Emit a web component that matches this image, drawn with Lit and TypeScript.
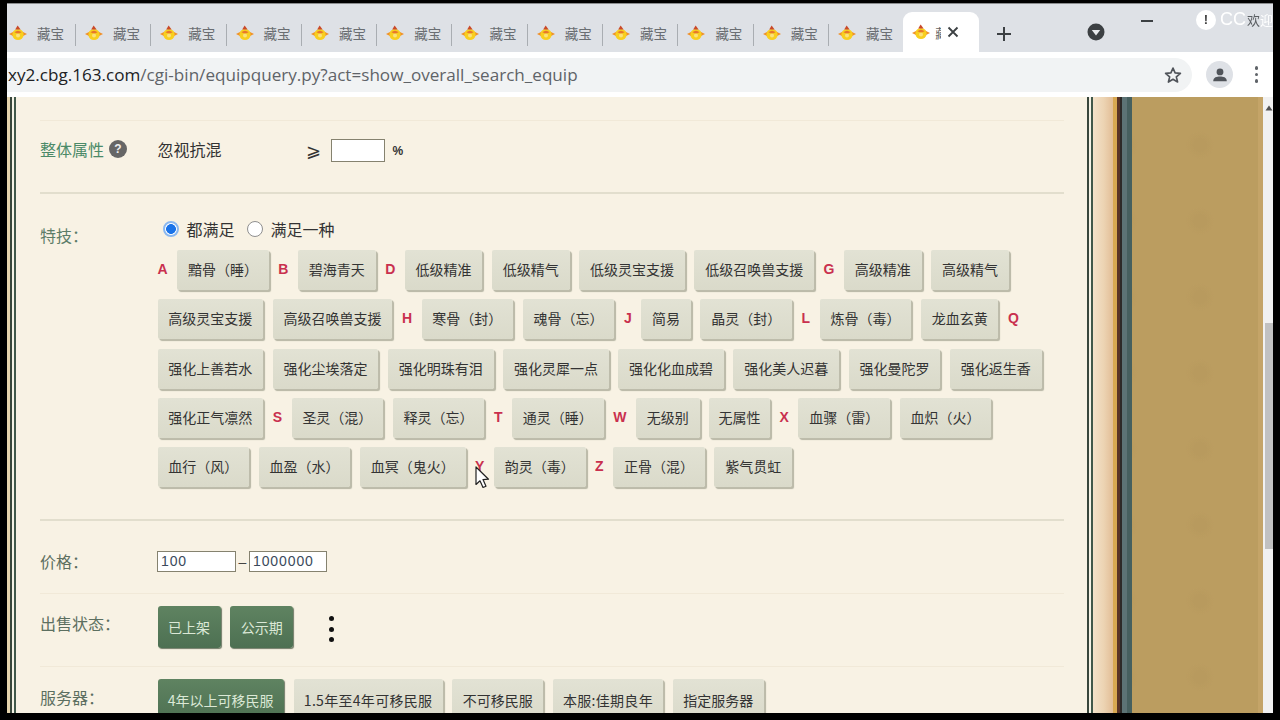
import { LitElement, html, css, svg } from "lit";
import { customElement } from "lit/decorators.js";

type Item = { l?: string; t?: string; narrow?: boolean };
const L = (l: string): Item => ({ l });
const B = (t: string, narrow = false): Item => ({ t, narrow });

const SKILLS: Item[] = [
  L("A"), B("黯骨（睡）"), L("B"), B("碧海青天"), L("D"), B("低级精准"), B("低级精气"), B("低级灵宝支援"), B("低级召唤兽支援"),
  L("G"), B("高级精准"), B("高级精气"),
  B("高级灵宝支援"), B("高级召唤兽支援"), L("H"), B("寒骨（封）"), B("魂骨（忘）"), L("J"), B("简易"), B("晶灵（封）"),
  L("L"), B("炼骨（毒）"), B("龙血玄黄"), L("Q"),
  B("强化上善若水"), B("强化尘埃落定"), B("强化明珠有泪"), B("强化灵犀一点"), B("强化化血成碧"), B("强化美人迟暮"), B("强化曼陀罗"), B("强化返生香"),
  B("强化正气凛然"), L("S"), B("圣灵（混）"), B("释灵（忘）"), L("T"), B("通灵（睡）"), L("W"), B("无级别"), B("无属性", true),
  L("X"), B("血骤（雷）"), B("血炽（火）"),
  B("血行（风）"), B("血盈（水）"), B("血冥（鬼火）"), L("Y"), B("韵灵（毒）"), L("Z"), B("正骨（混）"), B("紫气贯虹"),
];

const chick = svg`<svg class="fav" viewBox="0 0 18 18" width="18" height="18" aria-hidden="true">
  <path d="M0 10 L5 7.5 L5 12.5 Z" fill="#f0902a"/>
  <path d="M18 10 L13 7.5 L13 12.5 Z" fill="#f0902a"/>
  <circle cx="9" cy="10.5" r="5.6" fill="#f8cf1f"/>
  <path d="M6.2 5.6 L8.6 1.6 L11.6 5.6 Z" fill="#c9492a"/>
  <path d="M5.4 8.2 Q9 5.2 12.6 8.2 L9 9.8 Z" fill="#e8772a"/>
  <circle cx="9" cy="11.6" r="2" fill="#fbe27a"/>
</svg>`;

@customElement("app-root")
export class AppRoot extends LitElement {
  static styles = css`
    :host {
      display: block;
      width: 1280px;
      height: 720px;
      background: #000;
      overflow: hidden;
      font-family: "Noto Sans CJK SC", "Liberation Sans", sans-serif;
    }
    .frame {
      box-sizing: border-box;
      width: 1280px;
      height: 720px;
      padding: 3px 7px 7px 7px;
      display: flex;
      flex-direction: column;
      position: relative;
      filter: blur(0.45px);
    }
    .topline { height: 1px; background: #8a8c8e; flex: none; }
    .strip {
      flex: none;
      height: 48px;
      background: #dee1e6;
      display: flex;
      align-items: flex-end;
    }
    .tab {
      box-sizing: border-box;
      width: 75.3px;
      height: 38px;
      padding: 0 0 0 9px;
      display: flex;
      align-items: center;
      flex: none;
      position: relative;
    }
    .tab.first { width: 69px; padding-left: 2px; }
    .tab::after {
      content: "";
      position: absolute;
      right: 0;
      top: 10px;
      bottom: 6px;
      width: 1px;
      background: #a9adb2;
    }
    .tab.last::after { display: none; }
    .fav { flex: none; }
    .tab-text {
      margin-left: 10px;
      font-size: 13.5px;
      line-height: 16px;
      color: #6a6e72;
      white-space: nowrap;
    }
    .active {
      flex: none;
      box-sizing: border-box;
      width: 76px;
      height: 40px;
      margin-left: -1px;
      padding-left: 9px;
      background: #fff;
      border-radius: 9px 9px 0 0;
      display: flex;
      align-items: center;
    }
    .active .clip {
      width: 6px;
      overflow: hidden;
      margin-left: 5px;
      font-size: 13px;
      color: #666;
      white-space: nowrap;
    }
    .close { margin-left: 6px; flex: none; }
    .plus { margin: 0 0 10px 17px; flex: none; }
    .shield { margin: 0 0 11px 75px; flex: none; }
    .minus { margin: 0 0 30px 36px; width: 12px; height: 2px; background: #3c4043; flex: none; }

    .toolbar {
      flex: none;
      height: 45px;
      background: #fff;
      display: flex;
      align-items: center;
    }
    .omni {
      box-sizing: border-box;
      width: 1185px;
      height: 34px;
      background: #f1f3f4;
      border-radius: 0 17px 17px 0;
      padding: 0 9px 0 1px;
      display: flex;
      align-items: center;
      justify-content: space-between;
      flex: none;
    }
    .url {
      font-family: "Open Sans", "Noto Sans", sans-serif;
      font-size: 17.1px;
      color: #5f6368;
      white-space: nowrap;
    }
    .url b { font-weight: 400; color: #202124; }
    .avatar {
      flex: none;
      width: 27px;
      height: 27px;
      margin-left: 14px;
      border-radius: 50%;
      background: #dee1e6;
      display: flex;
      align-items: center;
      justify-content: center;
    }
    .menu { flex: none; margin-left: 22px; display: flex; flex-direction: column; gap: 3px; }
    .menu i { display: block; width: 3.4px; height: 3.4px; border-radius: 50%; background: #5f6368; }

    .view { flex: 1; min-height: 0; display: flex; position: relative; overflow: hidden; }
    .stripes-l {
      flex: none;
      width: 10px;
      background: linear-gradient(90deg, #e6d4ad 0 3.5px, #39473c 3.5px 5px, #f5f3e6 5px 7px, #41584a 7px 8.8px, #f8f2e4 8.8px);
    }
    .panel {
      flex: none;
      box-sizing: border-box;
      width: 1070px;
      background: #f8f2e4;
      padding: 23px 23px 0;
      color: #333;
    }
    .stripes-r {
      flex: none;
      width: 6px;
      background: linear-gradient(90deg, #39473c 0 1.6px, #f5f3e6 1.6px 3.8px, #41584a 3.8px 6px);
    }
    .deco-a { flex: none; width: 20px; background: linear-gradient(90deg, #f3e2ca, #ecd3b2 55%, #e2bd96); }
    .deco-b {
      flex: none;
      width: 19px;
      background: linear-gradient(90deg, #d8a851 0 4px, #5a3326 4px 7px, #2d2a28 7px 9px, #5c7375 9px 14px, #46605f 14px 19px);
    }
    .tan {
      flex: 1;
      background-color: #bb9d60;
      background-image:
        radial-gradient(circle at 50% 50%, #b89a5e 0 6px, transparent 14px),
        linear-gradient(90deg, transparent 96%, #c4a468 96%);
      background-size: 76px 76px, 131px 100%;
      background-position: 30px 10px, 0 0;
    }
    .scroll { flex: none; width: 10px; background: #f1f1f1; display: flex; flex-direction: column; align-items: flex-end; }
    .arrow { margin-top: 8px; flex: none; }
    .thumb { margin-top: 212px; width: 8px; height: 226px; background: #c1c1c1; flex: none; }

    .faint { height: 1px; background: #f1e9d8; }
    .solid { height: 2px; background: #e2decd; }
    .row { display: flex; align-items: flex-start; }
    .label { flex: none; width: 117.5px; font-size: 16px; line-height: 24px; color: #5c7d68; white-space: nowrap; display: flex; align-items: center; }
    .label.green { color: #4b8a68; }
    .label.plain { color: #5c6f60; }
    .help {
      margin-left: 5px;
      width: 18px;
      height: 18px;
      border-radius: 50%;
      background: #666;
      color: #eee;
      font: bold 12px/18px "Liberation Sans", sans-serif;
      text-align: center;
    }
    .attr { padding: 18px 0 30px; align-items: center; height: 23px; }
    .attr .label, .attr .name { padding-bottom: 3px; }
    .attr .name { width: 148px; font-size: 16px; color: #333; }
    .ge { width: 25px; font-size: 18px; color: #333; line-height: 23px; padding-bottom: 3px; }
    .box {
      box-sizing: border-box;
      width: 54px;
      height: 23px;
      background: #fff;
      border: 1px solid #85826f;
    }
    .pct { margin-left: 8px; font: bold 12px "Liberation Sans", sans-serif; color: #333; }

    .skills { padding: 23px 0 0; }
    .skills .label { margin-top: 6px; }
    .body { flex: 1; min-width: 0; }
    .radios { display: flex; align-items: center; height: 24px; font-size: 16px; color: #333; white-space: nowrap; }
    .radio {
      box-sizing: border-box;
      width: 16px;
      height: 16px;
      border-radius: 50%;
      border: 1.5px solid #8f8f8f;
      background: #fff;
      margin: 0 8px 0 5px;
      flex: none;
    }
    .radio.on { border: 2px solid #8ab8f0; background: radial-gradient(circle, #1a73e8 0 4.6px, #fff 5.2px); }
    .radio.second { margin-left: 12px; }
    .wrap { display: flex; flex-wrap: wrap; align-items: center; column-gap: 9.5px; row-gap: 9.3px; margin-top: 9px; }
    .letter { font: bold 14px/20px "Liberation Sans", sans-serif; color: #c9304e; margin-top: -2px; }
    .btn {
      box-sizing: border-box;
      height: 40px;
      padding: 0 10.85px 2px;
      display: flex;
      align-items: center;
      background: linear-gradient(#e2e2d4, #dadaca);
      color: #333;
      font-size: 14px;
      border-radius: 2px;
      box-shadow: 1px 1px 0 #bdbcab, 2px 2px 1px #b6b5a4;
      white-space: nowrap;
    }
    .btn.narrow { padding: 0 9.5px 2px; }
    .after { height: 32px; }
    .price { padding: 30px 0 21px; align-items: center; height: 21px; }
    .price .label { width: 117px; height: 21px; line-height: 21px; }
    .input {
      box-sizing: border-box;
      height: 21px;
      background: #fff;
      border: 1px solid #85826f;
      padding-left: 3px;
      font: 14px/19px "Liberation Sans", sans-serif;
      letter-spacing: 0.9px;
      color: #3b4a5c;
    }
    .input.a { width: 79px; }
    .input.b { width: 78px; }
    .dash { width: 13px; text-align: center; color: #444; font: 14px "Liberation Sans", sans-serif; }
    .status { padding: 12px 0 18px; align-items: center; }
    .status .label { margin-top: -9px; }
    .gbtn {
      box-sizing: border-box;
      height: 42px;
      padding: 0 10.5px;
      display: flex;
      align-items: center;
      background: linear-gradient(#5f8361, #4d7052);
      color: #dbe8d6;
      font-size: 14px;
      border-radius: 3px;
      box-shadow: 1px 1px 1px #6f7a66;
      white-space: nowrap;
    }
    .btns { display: flex; gap: 9.7px; align-items: flex-start; }
    .kebab { display: flex; flex-direction: column; gap: 5.5px; margin: 10px 0 0 26px; }
    .kebab i { display: block; width: 5px; height: 5px; border-radius: 50%; background: #111; }
    .servers { padding-top: 12px; }
    .servers .label { margin-top: 6px; }
    .servers .btn, .servers .gbtn { height: 42px; font-size: 14px; padding: 0 10.3px; }
    .servers .btn.spaced { letter-spacing: 0.3px; }
    .cursor { position: absolute; left: 468px; top: 369px; }
    .mark {
      position: absolute;
      left: 1196px;
      top: 9px;
      display: flex;
      align-items: center;
      color: #fff;
      font: 18px "Liberation Sans", "Noto Sans CJK SC", sans-serif;
      white-space: nowrap;
    }
    .dot {
      width: 20px;
      height: 20px;
      border-radius: 50%;
      background: #fff;
      color: #444;
      font: bold 13px/20px "Liberation Sans", sans-serif;
      text-align: center;
      flex: none;
      margin-right: 4px;
    }
    .mark em { font-style: normal; font-size: 13px; color: #5a5e62; margin-left: 1px; }
    .mark u { text-decoration: none; font-size: 13px; }
  `;

  render() {
    const tabs = Array.from({ length: 12 }, (_, i) => html`
      <div class="tab ${i === 0 ? "first" : ""} ${i === 11 ? "last" : ""}">${chick}<span class="tab-text">藏宝</span></div>`);
    return html`
      <div class="frame">
        <div class="topline"></div>
        <div class="strip">
          ${tabs}
          <div class="active">
            ${chick}
            <span class="clip">藏宝</span>
            <svg class="close" viewBox="0 0 12 12" width="12" height="12" aria-hidden="true"><path d="M1.5 1.5 L10.5 10.5 M10.5 1.5 L1.5 10.5" stroke="#3c4043" stroke-width="1.8"/></svg>
          </div>
          <svg class="plus" viewBox="0 0 16 16" width="16" height="16" aria-hidden="true"><path d="M8 1 V15 M1 8 H15" stroke="#3c4043" stroke-width="2"/></svg>
          <svg class="shield" viewBox="0 0 18 18" width="18" height="18" aria-hidden="true"><circle cx="9" cy="9" r="8.5" fill="#3c4043"/><path d="M4.8 7 H13.2 L9 12.6 Z" fill="#e8eaed"/></svg>
          <div class="minus"></div>
        </div>
        <div class="toolbar">
          <div class="omni">
            <span class="url"><b>xy2.cbg.163.com</b>/cgi-bin/equipquery.py?act=show_overall_search_equip</span>
            <svg viewBox="0 0 24 24" width="20" height="20" aria-hidden="true"><path d="M12 3.6 L14.5 9.5 L20.9 10 L16 14.2 L17.5 20.4 L12 17.1 L6.5 20.4 L8 14.2 L3.1 10 L9.5 9.5 Z" fill="none" stroke="#50545a" stroke-width="2" stroke-linejoin="round"/></svg>
          </div>
          <div class="avatar">
            <svg viewBox="0 0 20 20" width="18" height="18" aria-hidden="true"><circle cx="10" cy="6.6" r="3.8" fill="#50545a"/><path d="M2.5 17 C2.5 12.6 6.5 11.8 10 11.8 C13.5 11.8 17.5 12.6 17.5 17 Z" fill="#50545a"/></svg>
          </div>
          <div class="menu"><i></i><i></i><i></i></div>
        </div>
        <div class="view">
          <div class="stripes-l"></div>
          <div class="panel">
            <div class="faint"></div>
            <div class="row attr">
              <div class="label green">整体属性<span class="help">?</span></div>
              <div class="name">忽视抗混</div>
              <div class="ge">⩾</div>
              <div class="box"></div>
              <div class="pct">%</div>
            </div>
            <div class="solid"></div>
            <div class="row skills">
              <div class="label">特技：</div>
              <div class="body">
                <div class="radios">
                  <span class="radio on"></span>都满足
                  <span class="radio second"></span>满足一种
                </div>
                <div class="wrap">
                  ${SKILLS.map((s) => s.l
                    ? html`<span class="letter">${s.l}</span>`
                    : html`<span class="btn ${s.narrow ? "narrow" : ""}">${s.t}</span>`)}
                </div>
              </div>
            </div>
            <div class="after"></div>
            <div class="solid"></div>
            <div class="row price">
              <div class="label plain">价格：</div>
              <div class="input a">100</div>
              <div class="dash">–</div>
              <div class="input b">1000000</div>
            </div>
            <div class="faint"></div>
            <div class="row status">
              <div class="label plain">出售状态：</div>
              <div class="btns">
                <span class="gbtn">已上架</span>
                <span class="gbtn">公示期</span>
                <span class="kebab"><i></i><i></i><i></i></span>
              </div>
            </div>
            <div class="faint"></div>
            <div class="row servers">
              <div class="label plain">服务器：</div>
              <div class="btns">
                <span class="gbtn">4年以上可移民服</span>
                <span class="btn spaced">1.5年至4年可移民服</span>
                <span class="btn">不可移民服</span>
                <span class="btn spaced">本服:佳期良年</span>
                <span class="btn">指定服务器</span>
              </div>
            </div>
          </div>
          <div class="stripes-r"></div>
          <div class="deco-a"></div>
          <div class="deco-b"></div>
          <div class="tan"></div>
          <div class="scroll">
            <svg class="arrow" viewBox="0 0 8 6" width="8" height="6" aria-hidden="true"><path d="M4 0.5 L7.5 5.5 H0.5 Z" fill="#505050"/></svg>
            <div class="thumb"></div>
          </div>
          <svg class="cursor" viewBox="0 0 15 23" width="15" height="23" aria-hidden="true"><path d="M1 1 V18.5 L5 14.8 L8 21.5 L11 20.2 L8 13.6 L13.5 13.2 Z" fill="#fff" stroke="#222" stroke-width="1.2" stroke-linejoin="round"/></svg>
        </div>
        <div class="mark"><span class="dot">!</span><span>CC</span><em>欢</em><u>迎</u></div>
      </div>
    `;
  }
}
